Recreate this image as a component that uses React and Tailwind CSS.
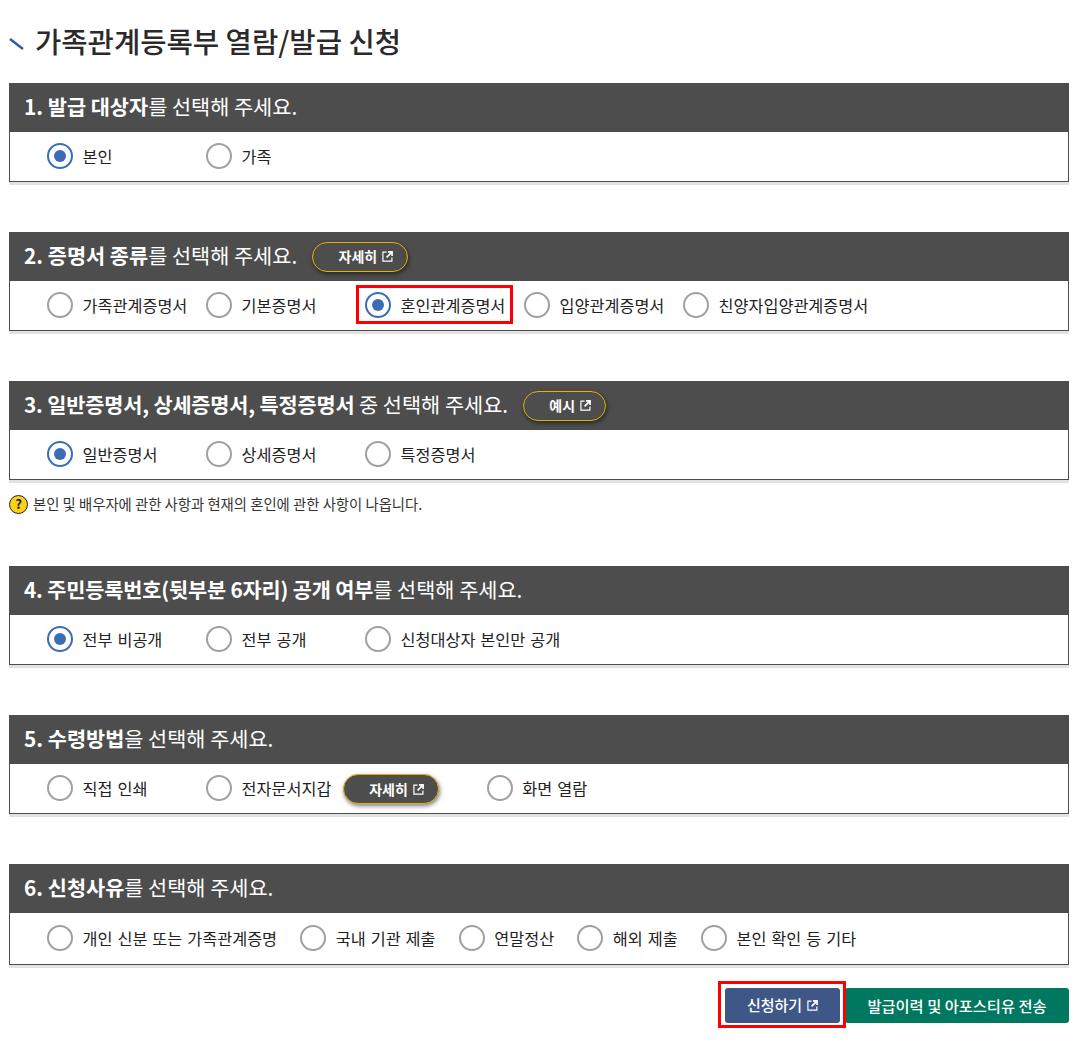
import React from "react";

const font = "font-['Noto_Sans_CJK_KR','Noto_Sans',sans-serif]";

function LinkIcon({ size = 11 }) {
  return (
    <svg width={size} height={size} viewBox="0 0 12 12" fill="none" stroke="currentColor" strokeWidth="1.3" className="inline-block">
      <path d="M5 1.2H1v9.8h9.8V7" />
      <path d="M6.500 1h4.500v4.500M11 1 5 7" strokeWidth="1.800" />
    </svg>
  );
}

function Pill({ label, width }) {
  return (
    <span
      className={`flex h-[30px] items-center justify-end rounded-full border border-[#e5b200] bg-[#4d4d4d] pr-[14px] text-[14px] font-bold text-white shadow-[1px_2px_4px_rgba(0,0,0,0.5)] ${width}`}
    >
      <span className="mr-[5px]">{label}</span>
      <LinkIcon />
    </span>
  );
}

// compact = no fixed column, used by the last section
function Radio({ label, checked, boxed, compact, children }) {
  return (
    <label className={`flex flex-none items-center ${compact ? "mr-[23.200px]" : "w-[159px]"}`}>
      <span className="relative flex items-center">
        <span
          className={`flex size-[26px] flex-none items-center justify-center rounded-full border-[2.500px] bg-white ${
            checked ? "border-[#3b6db5]" : "border-[#a0a0a0]"
          }`}
        >
          {checked && <span className="size-[12px] rounded-full bg-[#3b6db5]" />}
        </span>
        <span className="ml-[9.500px] text-[16.300px] leading-6 whitespace-nowrap text-[#222] [word-spacing:1.300px]">{label}</span>
        {boxed && (
          <span className="absolute top-[-7px] right-[-8px] bottom-[-6px] left-[-9px] border-[3px] border-[#f00]" />
        )}
      </span>
      {children}
    </label>
  );
}

function Section({ title, pill, tall, options }) {
  return (
    <section className="shadow-[0_3px_0_#e2e2e2]">
      <div className="flex h-[49px] items-center bg-[#4d4d4d] pl-[15px] text-[20.800px] text-white">
        <h2 className="pb-[2px] font-normal whitespace-nowrap">{title}</h2>
        {pill}
      </div>
      <div
        className={`flex items-center border border-t-0 border-[#4d4d4d] pb-[2px] pl-[37px] ${
          tall ? "h-[52px]" : "h-[50px]"
        }`}
      >
        {options}
      </div>
    </section>
  );
}

export default function App() {
  return (
    <div className={`${font} h-[1061px] bg-white pt-[21px] pr-[6px] pl-[9px] text-[#222]`}>
      <div className="mb-[21px] flex h-[41px] items-center">
        <svg width="15" height="12" viewBox="0 0 15 12" className="mt-[4px] mr-[11px] flex-none">
          <path d="M1 1 14 11" stroke="#2f5f9e" strokeWidth="2.500" />
        </svg>
        <h1 className="text-[28.600px] font-medium text-[#2a2a2a]">가족관계등록부 열람/발급 신청</h1>
      </div>

      <div className="flex flex-col gap-[50px]">
        <Section
          title={<><b>1. 발급 대상자</b>를 선택해 주세요.</>}
          options={<><Radio label="본인" checked /><Radio label="가족" /></>}
        />
        <Section
          title={<><b>2. 증명서 종류</b>를 선택해 주세요.</>}
          pill={<span className="ml-[15px]"><Pill label="자세히" width="w-[96px]" /></span>}
          options={
            <>
              <Radio label="가족관계증명서" />
              <Radio label="기본증명서" />
              <Radio label="혼인관계증명서" checked boxed />
              <Radio label="입양관계증명서" />
              <Radio label="친양자입양관계증명서" />
            </>
          }
        />
        <div>
          <Section
            title={<><b className="tracking-[-0.150px]">3. 일반증명서, 상세증명서, 특정증명서</b> 중 선택해 주세요.</>}
            pill={<span className="ml-[15px]"><Pill label="예시" width="w-[83px]" /></span>}
            options={
              <>
                <Radio label="일반증명서" checked />
                <Radio label="상세증명서" />
                <Radio label="특정증명서" />
              </>
            }
          />
          <p className="mt-[14px] -mb-[14px] flex h-[20px] items-center text-[14.350px] text-[#333]">
            <span className="mr-[5px] flex size-[19px] flex-none items-center justify-center rounded-full border border-[#222] bg-[#fbd214] text-[13px] font-bold text-[#222]">?</span>
            본인 및 배우자에 관한 사항과 현재의 혼인에 관한 사항이 나옵니다.
          </p>
        </div>
        <div className="mt-[16px]">
          <Section
            title={<><b className="tracking-[-0.150px]">4. 주민등록번호(뒷부분 6자리) 공개 여부</b>를 선택해 주세요.</>}
            options={
              <>
                <Radio label="전부 비공개" checked />
                <Radio label="전부 공개" />
                <Radio label="신청대상자 본인만 공개" />
              </>
            }
          />
        </div>
        <Section
          title={<><b>5. 수령방법</b>을 선택해 주세요.</>}
          options={
            <>
              <Radio label="직접 인쇄" />
              <Radio label="전자문서지갑" compact>
                <span className="mt-[3px] mr-[24.800px] ml-[11.500px]"><Pill label="자세히" width="w-[96px]" /></span>
              </Radio>
              <Radio label="화면 열람" />
            </>
          }
        />
        <Section
          tall
          title={<><b>6. 신청사유</b>를 선택해 주세요.</>}
          options={
            <>
              <Radio compact label="개인 신분 또는 가족관계증명" />
              <Radio compact label="국내 기관 제출" />
              <Radio compact label="연말정산" />
              <Radio compact label="해외 제출" />
              <Radio compact label="본인 확인 등 기타" />
            </>
          }
        />
      </div>

      <div className="mt-[23px] flex justify-end gap-[5px]">
        <button className="relative z-10 flex h-[35px] w-[115px] items-center justify-center gap-[5px] rounded-[3px] bg-[#3f5787] text-[15px] font-medium text-white">
          신청하기 <LinkIcon />
          <span className="absolute top-[-7px] right-[-6px] bottom-[-5px] left-[-7px] border-[3px] border-[#f00]" />
        </button>
        <button className="h-[35px] w-[224px] rounded-[3px] bg-[#00785f] text-[15.300px] font-medium text-white">
          발급이력 및 아포스티유 전송
        </button>
      </div>
    </div>
  );
}
